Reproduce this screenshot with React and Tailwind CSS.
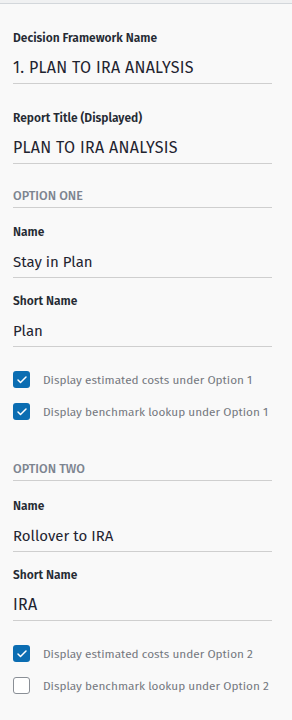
import { Check } from "lucide-react";

const font = { fontFamily: "'Fira Sans', Lato, 'Open Sans', sans-serif" };

function Field({ label, value, caps = false, className = "" }) {
  return (
    <div className={className}>
      <div className="text-[12px] leading-[16px] font-semibold text-[#252a33]">{label}</div>
      <div
        className={`mt-[11px] pb-[4px] border-b border-[#cfcfcf] leading-[22px] text-[#1f2430] ${
          caps ? "text-[16px] tracking-[0.3px]" : "text-[15px]"
        }`}
      >
        {value}
      </div>
    </div>
  );
}

function Checkbox({ checked, label, className = "" }) {
  return (
    <label className={`flex items-center gap-[13px] ${className}`}>
      {checked ? (
        <span className="shrink-0 w-[17px] h-[17px] rounded-[3px] bg-[#0b6db2] flex items-center justify-center">
          <Check size={12} strokeWidth={3} color="#fff" />
        </span>
      ) : (
        <span className="shrink-0 w-[17px] h-[17px] rounded-[3px] border border-[#8a8f96] bg-white" />
      )}
      <span className="whitespace-nowrap text-[11.8px] leading-[16px] text-[#74777e]">{label}</span>
    </label>
  );
}

function SectionHeader({ children, className = "" }) {
  return (
    <div className={`pb-[3px] border-b border-[#cfcfcf] text-[12.5px] leading-[16px] font-medium text-[#7d8490] uppercase ${className}`}>
      {children}
    </div>
  );
}

export default function App() {
  return (
    <div style={font} className="w-[292px] h-[720px] bg-[#f0f1f2] pt-[3px]">
      <div className="h-full bg-[#f9f9f9] border-t border-[#d3d7db] pl-[13px] pr-[20px] pt-[26px]">
        <Field label="Decision Framework Name" value="1. PLAN TO IRA ANALYSIS" caps />
        <Field label="Report Title (Displayed)" value="PLAN TO IRA ANALYSIS" caps className="mt-[26px]" />

        <SectionHeader className="mt-[24px]">Option One</SectionHeader>
        <Field label="Name" value="Stay in Plan" className="mt-[16px]" />
        <Field label="Short Name" value="Plan" className="mt-[15px]" />
        <Checkbox checked label="Display estimated costs under Option 1" className="mt-[24px]" />
        <Checkbox checked label="Display benchmark lookup under Option 1" className="mt-[15px]" />

        <SectionHeader className="mt-[41px]">Option Two</SectionHeader>
        <Field label="Name" value="Rollover to IRA" className="mt-[17px]" />
        <Field label="Short Name" value="IRA" caps className="mt-[15px]" />
        <Checkbox checked label="Display estimated costs under Option 2" className="mt-[24px]" />
        <Checkbox label="Display benchmark lookup under Option 2" className="mt-[15px]" />
      </div>
    </div>
  );
}
